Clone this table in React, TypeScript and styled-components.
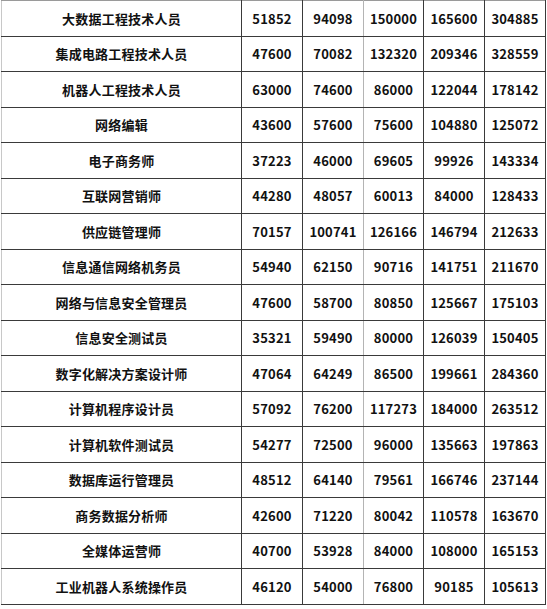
import React from 'react';
import styled, { createGlobalStyle } from 'styled-components';

const GlobalStyle = createGlobalStyle`
  html, body {
    margin: 0;
    padding: 0;
    background: #ffffff;
  }
  body {
    font-family: "Noto Sans CJK SC", "Noto Sans", sans-serif;
    color: #111;
  }
`;

const Sheet = styled.table`
  margin-left: 1px;
  border-collapse: collapse;
  table-layout: fixed;
  width: 544px;
  border-top: 1px solid #9a9a9a;
  border-left: 1px solid #c8c8c8;
`;

const Col = styled.col<{ $w: number }>`
  width: ${({ $w }) => $w}px;
`;

const Row = styled.tr`
  height: 35.5px;
`;

const Cell = styled.td<{ $light?: boolean }>`
  padding: 0;
  text-align: center;
  vertical-align: middle;
  font-size: 13px;
  font-weight: 700;
  letter-spacing: 0.2px;
  line-height: 1;
  border-bottom: 1px solid #3a3a3a;
  border-right: 1px solid ${({ $light }) => ($light ? '#b4b4b4' : '#3a3a3a')};
`;

const colWidths = [240, 61, 61, 60, 61, 61];

const rows: [string, number[]][] = [
  ['大数据工程技术人员', [51852, 94098, 150000, 165600, 304885]],
  ['集成电路工程技术人员', [47600, 70082, 132320, 209346, 328559]],
  ['机器人工程技术人员', [63000, 74600, 86000, 122044, 178142]],
  ['网络编辑', [43600, 57600, 75600, 104880, 125072]],
  ['电子商务师', [37223, 46000, 69605, 99926, 143334]],
  ['互联网营销师', [44280, 48057, 60013, 84000, 128433]],
  ['供应链管理师', [70157, 100741, 126166, 146794, 212633]],
  ['信息通信网络机务员', [54940, 62150, 90716, 141751, 211670]],
  ['网络与信息安全管理员', [47600, 58700, 80850, 125667, 175103]],
  ['信息安全测试员', [35321, 59490, 80000, 126039, 150405]],
  ['数字化解决方案设计师', [47064, 64249, 86500, 199661, 284360]],
  ['计算机程序设计员', [57092, 76200, 117273, 184000, 263512]],
  ['计算机软件测试员', [54277, 72500, 96000, 135663, 197863]],
  ['数据库运行管理员', [48512, 64140, 79561, 166746, 237144]],
  ['商务数据分析师', [42600, 71220, 80042, 110578, 163670]],
  ['全媒体运营师', [40700, 53928, 84000, 108000, 165153]],
  ['工业机器人系统操作员', [46120, 54000, 76800, 90185, 105613]],
];

export default function App() {
  return (
    <>
      <GlobalStyle />
      <Sheet>
        <colgroup>
          {colWidths.map((w, i) => (
            <Col key={i} $w={w} />
          ))}
        </colgroup>
        <tbody>
          {rows.map(([name, values]) => (
            <Row key={name}>
              <Cell>{name}</Cell>
              {values.map((v, i) => (
                <Cell key={i} $light={i === 1}>
                  {v}
                </Cell>
              ))}
            </Row>
          ))}
        </tbody>
      </Sheet>
    </>
  );
}
